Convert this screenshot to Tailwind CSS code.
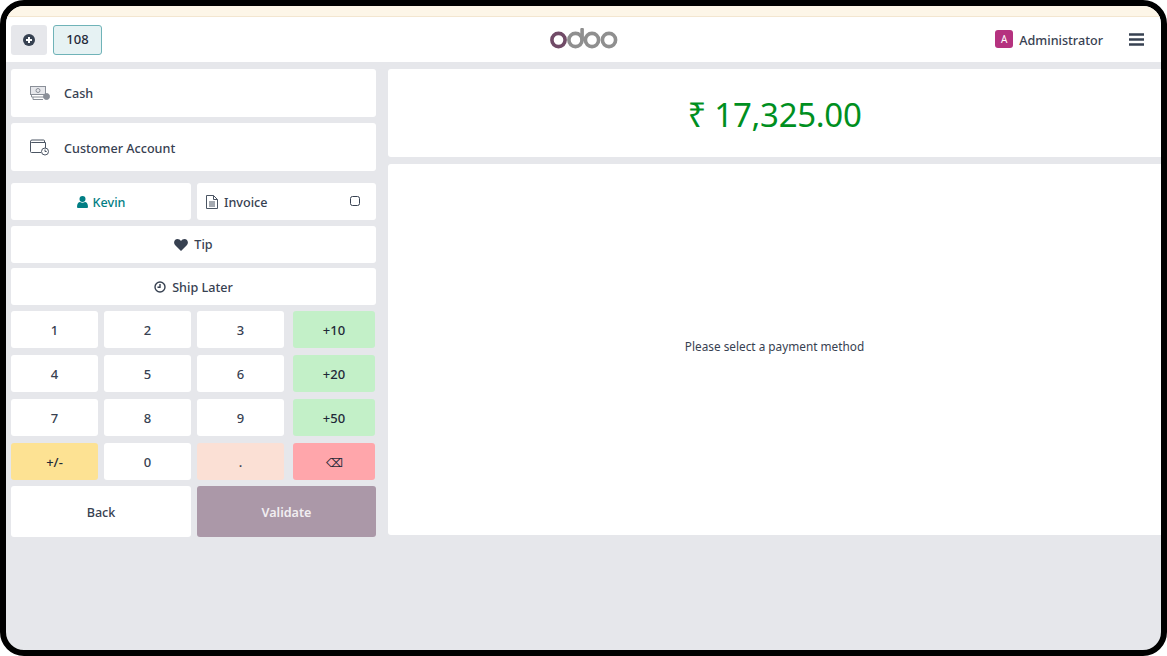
<!DOCTYPE html>
<html lang="en">
<head>
    <meta charset="UTF-8">
    <title>Odoo POS - Payment</title>
    <script src="https://cdn.jsdelivr.net/npm/@tailwindcss/browser@4"></script>
</head>
<body class="bg-white overflow-hidden font-['Noto_Sans','Open_Sans',sans-serif] text-[#374151]">
    <div class="w-[1167px] h-[656px] border-[6px] border-black rounded-[24px] overflow-hidden flex flex-col bg-[#e6e7eb]">
        <!-- top strip -->
        <div class="h-[11px] shrink-0 bg-[#fdf6e8] border-b border-[#f3e6d0]"></div>

        <!-- header -->
        <div class="h-[45px] shrink-0 bg-white flex items-center justify-between pl-[5px] pr-[17px] relative">
            <div class="flex items-center gap-[6px]">
                <div class="w-[36px] h-[30px] rounded-[3px] bg-[#e6e7eb] flex items-center justify-center">
                    <svg width="12" height="12" viewBox="0 0 12 12"><circle cx="6" cy="6" r="6" fill="#374151"/><path d="M6 3v6M3 6h6" stroke="#fff" stroke-width="2"/></svg>
                </div>
                <div class="w-[49px] h-[30px] rounded-[3px] bg-[#e6f2f3] border border-[#6fb3b8] flex items-center justify-center text-[13px] font-medium text-[#1f2937]">108</div>
            </div>
            <svg class="absolute left-[544px] top-[11px]" width="68" height="22" viewBox="0 0 68 22" fill="none">
                <circle cx="8.500" cy="12" r="6.600" stroke="#714b67" stroke-width="3.600"/>
                <circle cx="25.500" cy="12" r="6.600" stroke="#8f8f8f" stroke-width="3.600"/>
                <path d="M32.100 1.500v10.500" stroke="#8f8f8f" stroke-width="3.600" stroke-linecap="round"/>
                <circle cx="42" cy="12" r="6.600" stroke="#8f8f8f" stroke-width="3.600"/>
                <circle cx="59" cy="12" r="6.600" stroke="#8f8f8f" stroke-width="3.600"/>
            </svg>
            <div class="flex items-center">
                <div class="w-[18px] h-[18px] rounded-[3px] bg-[#b5327f] text-white text-[10px] flex items-center justify-center">A</div>
                <span class="ml-[6px] pt-[4px] text-[12.6px] font-medium text-[#374151]">Administrator</span>
                <svg class="ml-[26px]" width="15" height="13" viewBox="0 0 15 13"><path d="M0 1.500h15M0 6.500h15M0 11.500h15" stroke="#374151" stroke-width="2.400"/></svg>
            </div>
        </div>

        <!-- body -->
        <div class="flex pl-[5px] pt-[7px] gap-[12px]">
            <!-- left column -->
            <div class="w-[365px] shrink-0 flex flex-col text-[12.6px] font-medium">
                <div class="h-[48px] bg-white rounded-[3px] flex items-center pl-[19px]">
                    <svg width="20" height="14" viewBox="0 0 20 14" fill="none" stroke="#8a8f98" stroke-width="1">
                        <rect x="0.500" y="0.500" width="15" height="8" fill="#e6e7eb"/>
                        <circle cx="8" cy="4.500" r="2"/>
                        <path d="M1.500 8.500v2.500h13M3 11v2.500h10"/>
                        <circle cx="16.500" cy="10.500" r="3" fill="#8a8f98"/>
                    </svg>
                    <span class="ml-[14px] pt-[2px]">Cash</span>
                </div>
                <div class="h-[48px] mt-[6px] bg-white rounded-[3px] flex items-center pl-[19px]">
                    <svg width="20" height="17" viewBox="0 0 20 17" fill="none" stroke="#4b5563" stroke-width="1">
                        <path d="M15.500 9V3.500h-14a1 1 0 0 1-1-1v10a1 1 0 0 0 1 1H11"/>
                        <path d="M0.500 2.500a1.500 1.500 0 0 1 1.500-1.500h11.500a1 1 0 0 1 1 1v1.500"/>
                        <circle cx="15" cy="12.500" r="3.500"/>
                        <path d="M15 10.500v2h1.700"/>
                    </svg>
                    <span class="ml-[14px] pt-[4px]">Customer Account</span>
                </div>

                <div class="flex gap-[6px] mt-[12px] h-[37px]">
                    <div class="w-[180px] bg-white rounded-[3px] flex items-center justify-center text-[#017e84]">
                        <svg width="11" height="12" viewBox="0 0 11 12" fill="#017e84"><circle cx="5.500" cy="3" r="3"/><path d="M0 11c0-3.500 1.500-5 3-5 1.500 1 3.500 1 5 0 1.500 0 3 1.500 3 5a1 1 0 0 1-1 1H1a1 1 0 0 1-1-1z"/></svg>
                        <span class="ml-[5px] pt-[3px]">Kevin</span>
                    </div>
                    <div class="flex-1 bg-white rounded-[3px] flex items-center pl-[9px] pr-[16px]">
                        <svg width="12" height="14" viewBox="0 0 12 14" fill="none" stroke="#4b5563" stroke-width="1"><path d="M0.500 0.500h7l4 4v9h-11zM7.500 0.500v4h4M3 7h6M3 9h6M3 11h6"/></svg>
                        <span class="ml-[6px] pt-[3px]">Invoice</span>
                        <span class="ml-auto mb-[2px] w-[10px] h-[10px] border border-[#374151] rounded-[2.500px]"></span>
                    </div>
                </div>
                <div class="h-[37px] mt-[6px] bg-white rounded-[3px] flex items-center justify-center">
                    <svg width="14" height="12" viewBox="0 0 14 12" fill="#374151"><path d="M7 12 1 6C-1 3.500 0.500 0 3.500 0 5 0 6.200 0.800 7 2 7.800 0.800 9 0 10.500 0 13.500 0 15 3.500 13 6z"/></svg>
                    <span class="ml-[6px] pt-[2px]">Tip</span>
                </div>
                <div class="h-[37px] mt-[5px] bg-white rounded-[3px] flex items-center justify-center">
                    <svg width="12" height="12" viewBox="0 0 12 12" fill="none" stroke="#374151" stroke-width="1.400"><circle cx="6" cy="6" r="5"/><path d="M6 3v3.300H3.500"/></svg>
                    <span class="ml-[6px] pt-[4px]">Ship Later</span>
                </div>

                <!-- numpad -->
                <div class="grid grid-cols-[87px_87px_87px_83px] gap-x-[6px] gap-y-[7px] mt-[6px] text-[13px] [&>div]:h-[37px] [&>div]:rounded-[3px] [&>div]:flex [&>div]:items-center [&>div]:justify-center [&>div]:pt-[2px]">
                    <div class="bg-white">1</div>
                    <div class="bg-white">2</div>
                    <div class="bg-white">3</div>
                    <div class="bg-[#c3f0c8] ml-[3px] w-[82px] text-[#1f2937]">+10</div>
                    <div class="bg-white">4</div>
                    <div class="bg-white">5</div>
                    <div class="bg-white">6</div>
                    <div class="bg-[#c3f0c8] ml-[3px] w-[82px] text-[#1f2937]">+20</div>
                    <div class="bg-white">7</div>
                    <div class="bg-white">8</div>
                    <div class="bg-white">9</div>
                    <div class="bg-[#c3f0c8] ml-[3px] w-[82px] text-[#1f2937]">+50</div>
                    <div class="bg-[#fde293] text-[#1f2937]">+/-</div>
                    <div class="bg-white">0</div>
                    <div class="bg-[#fbe0d5]">.</div>
                    <div class="bg-[#ffa6ab] ml-[3px] w-[82px] text-[12px] text-[#1f2937]">⌫</div>
                </div>

                <div class="flex gap-[6px] mt-[6px] h-[51px]">
                    <div class="w-[180px] bg-white rounded-[3px] flex items-center justify-center pt-[4px]">Back</div>
                    <div class="flex-1 bg-[#ab98a8] rounded-[3px] flex items-center justify-center pt-[4px] text-[#f1eef1] font-semibold">Validate</div>
                </div>
            </div>

            <!-- right column -->
            <div class="flex-1 flex flex-col gap-[7px]">
                <div class="h-[88px] bg-white rounded-l-[3px] flex items-center justify-center pt-[4px] text-[33px] tracking-[-0.3px] text-[#008f1f]">₹ 17,325.00</div>
                <div class="h-[371px] bg-white rounded-l-[3px] flex items-center justify-center pb-[6px] text-[11.8px]">Please select a payment method</div>
            </div>
        </div>
    </div>
</body>
</html>
